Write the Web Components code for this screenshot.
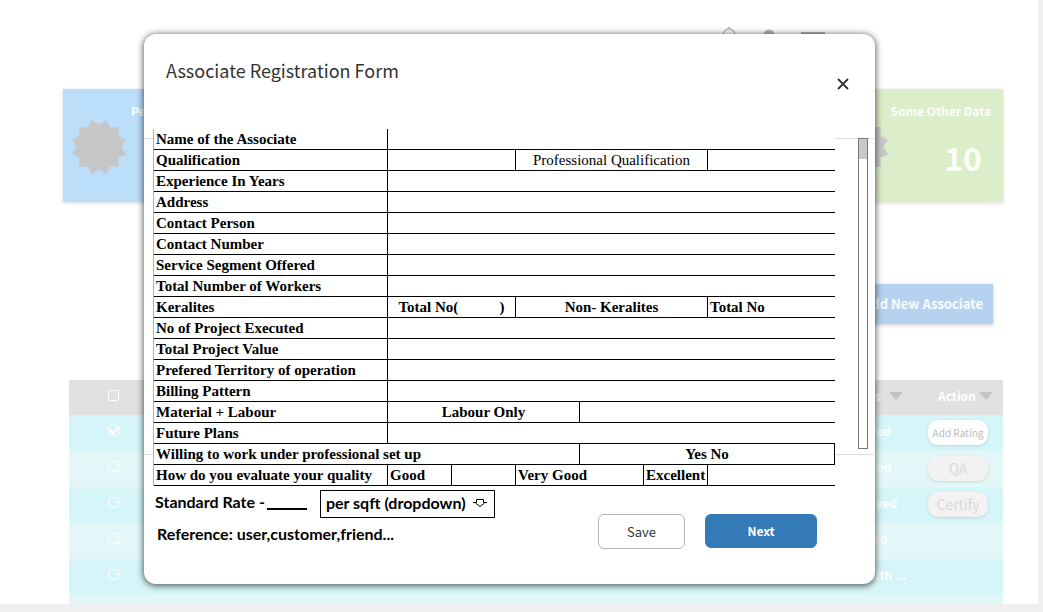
<!DOCTYPE html>
<html lang="en">
<head>
<meta charset="utf-8">
<title>Associate Registration</title>
<style>
  html, body { margin: 0; }
  body { position: relative; font-family: "Noto Sans CJK SC", "Open Sans", sans-serif; background: #fff; }
</style>
</head>
<body>
<dashboard-page>
  <stat-card slot="stats" tone="blue" heading="Pending"></stat-card>
  <stat-card slot="stats" tone="green" heading="Some Other Data" value="10"></stat-card>
  <associate-list></associate-list>
</dashboard-page>
<modal-dialog heading="Associate Registration Form">
  <registration-form></registration-form>
</modal-dialog>

<script>
const define = (name, html, setup) => {
  const template = document.createElement('template');
  template.innerHTML = html;
  customElements.define(name, class extends HTMLElement {
    constructor() {
      super();
      this.attachShadow({ mode: 'open' }).append(template.content.cloneNode(true));
    }
    connectedCallback() { if (setup) setup(this, this.shadowRoot); }
  });
};

define('burst-badge', `
<style>
  :host { display: block; width: 56px; height: 56px; }
  svg { display: block; }
</style>
<svg width="56" height="56" viewBox="0 0 56 56" aria-hidden="true"><polygon fill="#c6c6c6" stroke="#c6c6c6" stroke-width="3" stroke-linejoin="round"/></svg>`,
(host, root) => {
  const points = [];
  for (let i = 0; i < 24; i++) {
    const radius = i % 2 ? 26 : 20.5;
    const angle = i * Math.PI / 12;
    points.push((28 + radius * Math.sin(angle)).toFixed(2) + ',' + (28 - radius * Math.cos(angle)).toFixed(2));
  }
  root.querySelector('polygon').setAttribute('points', points.join(' '));
});

define('stat-card', `
<style>
  :host { display: grid; grid-template: 20px 1fr / 56px 1fr; width: 178px; height: 113px; box-sizing: border-box;
    padding: 12px 12px 0 8px; box-shadow: 0 1px 4px rgba(0,0,0,.15); color: #fbfdf9; }
  :host([tone=blue]) { background: #bbdefb; }
  :host([tone=green]) { background: #dbedc9; }
  h2 { grid-column: 1 / -1; margin: 0; font-size: 12px; line-height: 20px; font-weight: 700; text-align: right; }
  :host([tone=blue]) h2 { text-align: left; padding-left: 60px; }
  burst-badge { margin-top: -2px; }
  p { margin: 0; padding-right: 9px; font-size: 32px; line-height: 72px; font-weight: 700; text-align: right; }
</style>
<h2></h2><burst-badge></burst-badge><p></p>`,
(host, root) => {
  root.querySelector('h2').textContent = host.getAttribute('heading');
  root.querySelector('p').textContent = host.getAttribute('value') || '';
});

define('tick-box', `
<style>
  :host { display: block; width: 13px; height: 13px; }
  input { appearance: none; display: block; box-sizing: border-box; width: 11px; height: 11px; margin: 1px;
    border: 1px solid #fafefe; border-radius: 2px; }
  svg { display: none; position: absolute; margin-top: -12px; }
  :host([checked]) svg { display: block; }
</style>
<input type="checkbox" aria-label="Select row">
<svg width="14" height="11" viewBox="0 0 14 11" aria-hidden="true"><path d="M3 5l3 3 6-6" fill="none" stroke="#fff" stroke-width="2.4"/></svg>`,
(host, root) => { root.querySelector('input').checked = host.hasAttribute('checked'); });

define('associate-list', `
<style>
  :host { display: block; margin-left: 6px; }
  table { width: 100%; border-collapse: collapse; table-layout: fixed; color: #fcffff; font-size: 12px; line-height: 20px; }
  th, td { box-sizing: border-box; height: 36px; padding: 0 0 4px; text-align: left; vertical-align: middle; font-weight: 700; }
  th { height: 35px; background: #e1e1e1; }
  tbody tr { background: #e3f7f9; }
  tbody tr:nth-child(odd) { background: #d6f5f8; }
  .pick { width: 100px; padding-left: 38px; }
  .state { width: 88px; }
  .act { width: 75px; }
  .act button { margin-top: 2px; }
  .head { display: flex; align-items: center; justify-content: space-between; }
  .state .head { padding: 0 25px 0 3px; }
  .act .head { padding: 0 10px; }
  button { display: block; box-sizing: border-box; width: 60px; height: 25px; padding: 0; border: 0; border-radius: 10px;
    background: #f2f2f2; color: #dadada; font: 14px/25px "Noto Sans CJK SC", sans-serif; box-shadow: 0 1px 3px rgba(0,0,0,.12); }
  button.on { background: #fff; color: #bdbdbd; font-size: 10px; }
</style>
<table>
  <thead><tr>
    <th class="pick"><tick-box></tick-box></th><th></th>
    <th class="state"><div class="head">Status<svg width="14" height="8" aria-hidden="true"><path d="M0 0h14L7 8z" fill="#c4c4c4"/></svg></div></th>
    <th class="act"><div class="head">Action<svg width="14" height="8" aria-hidden="true"><path d="M0 0h14L7 8z" fill="#c4c4c4"/></svg></div></th>
  </tr></thead>
  <tbody></tbody>
</table>`,
(host, root) => {
  const rows = [
    ['Referred', '<button class="on" type="button">Add Rating</button>', true],
    ['Rejected', '<button type="button">QA</button>'],
    ['Approved', '<button type="button">Certify</button>'],
    ['Blocked', ''], ['Met With ...', ''], ['', '']
  ];
  root.querySelector('tbody').innerHTML = rows.map(([state, action, ticked]) =>
    `<tr><td class="pick"><tick-box ${ticked ? 'checked' : ''}></tick-box></td><td></td><td class="state">${state}</td><td class="act">${action}</td></tr>`).join('');
});

define('dashboard-page', `
<style>
  :host { display: block; box-sizing: border-box; height: 100vh; min-height: 612px; overflow: hidden;
    border-right: 5px solid #efefef; border-bottom: 8px solid #efefef; padding: 0 35px 0 63px; }
  header { display: flex; justify-content: flex-end; gap: 26px; height: 62px; padding: 27px 178px 0 0; }
  .stats { display: flex; justify-content: space-between; }
  .tools { display: flex; justify-content: flex-end; padding: 82px 10px 56px 0; }
  .tools button { height: 40px; padding: 0 10px; border: 0; background: #b7d2f0; color: #f8fbfe;
    font: 700 13px/40px "Noto Sans CJK SC", sans-serif; box-shadow: 0 1px 4px rgba(0,0,0,.2); }
</style>
<header>
  <svg width="16" height="24" viewBox="0 0 16 24" role="img" aria-label="Notifications"><path d="M2 16V8a6 6 0 0 1 12 0v8z" fill="none" stroke="#bdbdbd" stroke-width="1.5"/><path d="M8-1l2 3H6z" fill="#bdbdbd"/></svg>
  <svg width="12" height="24" viewBox="0 0 12 24" role="img" aria-label="Account"><circle cx="6" cy="8" r="5.5" fill="#b4b4b4"/></svg>
  <svg width="24" height="24" viewBox="0 0 24 24" role="img" aria-label="Menu"><path d="M0 6h24M0 12h24M0 18h24" stroke="#b0b0b0" stroke-width="2"/></svg>
</header>
<div class="stats"><slot name="stats"></slot></div>
<div class="tools"><button type="button">Add New Associate</button></div>
<slot></slot>`);

define('modal-dialog', `
<style>
  :host { display: block; position: absolute; inset: 0; padding: 34px 168px 28px 144px; }
  section { background: #fff; border-radius: 12px; box-shadow: 0 1px 6px 1px rgba(0,0,0,.6); }
  header { display: flex; align-items: flex-start; justify-content: space-between; box-sizing: border-box; height: 95px; padding: 22px 22px 0; }
  h1 { margin: 0; font-size: 18px; line-height: 28px; font-weight: 400; color: #333; }
  button { width: 20px; height: 20px; margin-top: 18px; padding: 0; border: 0; background: none; }
  svg { display: block; margin: auto; }
</style>
<section role="dialog" aria-labelledby="title">
  <header><h1 id="title"></h1>
    <button type="button" aria-label="Close"><svg width="12" height="12" viewBox="0 0 12 12"><path d="M1 1l10 10M11 1L1 11" stroke="#333" stroke-width="1.8"/></svg></button>
  </header>
  <slot></slot>
</section>`,
(host, root) => { root.querySelector('h1').textContent = host.getAttribute('heading'); });

define('scroll-track', `
<style>
  :host { display: block; box-sizing: border-box; width: 10px; height: 311px; border: 1px solid #777; background: #fff; }
  div { height: 20px; background: #c9c9c9; }
</style>
<div></div>`);

define('registration-form', `
<style>
  :host { display: block; }
  .body { position: relative; display: flex; align-items: flex-start; padding: 0 7px 0 9px; }
  .frame { position: absolute; inset: 9px 1px 31px 0; border: solid #ddd; border-width: 1px 0; }
  table { position: relative; flex: 1; width: 100%; border-collapse: separate; border-spacing: 0; table-layout: fixed; background: #fff;
    font: bold 15px/20px "Liberation Serif", serif; color: #000; border-left: 1px solid #a7b5c6; }
  scroll-track { position: relative; margin: 9px 0 0 23px; }
  .c1 { width: 233px; } .c { width: 64px; }
  th, td { box-sizing: border-box; height: 21px; padding: 0 0 0 2px; border-bottom: 1px solid #000; text-align: left; white-space: pre; }
  td { border-left: 1px solid #000; }
  .mid { text-align: center; padding: 0; }
  .plain { font-weight: normal; }
  .end { border-right: 1px solid #000; }
  input { display: block; box-sizing: border-box; width: 100%; height: 20px; margin: 0; padding: 0 4px; border: 0; background: none; font: inherit; outline: 0; }
  footer { display: flex; justify-content: space-between; align-items: flex-start; box-sizing: border-box; padding: 4px 58px 0 11px; height: 98px;
    font: 700 16px/28px Lato, sans-serif; color: #000; }
  .rate { display: flex; align-items: flex-start; height: 28px; }
  .rate label { line-height: 24px; }
  .rate input { width: 40px; height: 20px; margin: 0 13px 0 2px; border-bottom: 2px solid #000; }
  .unit { position: relative; display: flex; align-items: center; }
  select { appearance: none; box-sizing: border-box; width: 175px; height: 28px; padding: 0 5px 2px; border: 1px solid #000; border-radius: 0;
    background: #fff; color: #000; font: 700 16px/24px Lato, sans-serif; }
  .unit svg { position: absolute; right: 8px; top: 9px; pointer-events: none; }
  p { margin: 2px 0 0 2px; }
  .buttons { display: flex; gap: 20px; padding-top: 24px; }
  button { box-sizing: border-box; height: 34px; padding: 0; border-radius: 6px; font: 13px/32px "Noto Sans CJK SC", sans-serif; }
  .save { width: 87px; height: 35px; border: 1px solid #b5b5b5; background: #fff; color: #333; }
  .next { width: 112px; border: 1px solid #337ab7; background: #337ab7; color: #fff; font-weight: 700; font-size: 12px; }
</style>
<div class="body">
  <div class="frame"></div>
  <table>
    <colgroup><col class="c1"><col class="c"><col class="c"><col class="c"><col class="c"><col class="c"><col></colgroup>
    <tbody></tbody>
  </table>
  <scroll-track></scroll-track>
</div>
<footer>
  <div>
    <div class="rate">
      <label for="rate">Standard Rate -</label><input id="rate" type="text">
      <div class="unit"><select aria-label="Rate unit"><option>per sqft (dropdown)</option></select>
        <svg width="14" height="9" viewBox="0 0 14 9" aria-hidden="true"><path d="M0 3.5H3.5V.5H10.5V3.5H14M2.5 4L7 7.5 11.5 4" fill="none" stroke="#000"/></svg>
      </div>
    </div>
    <p>Reference: user,customer,friend...</p>
  </div>
  <div class="buttons"><button class="save" type="button">Save</button><button class="next" type="button">Next</button></div>
</footer>`,
(host, root) => {
  let count = 0;
  const field = (label, span) => `<td colspan="${span}"><input id="f${++count}" type="text" aria-label="${label}"></td>`;
  const head = (label, span = 1) => `<th scope="row" colspan="${span}">${label}</th>`;
  const line = label => `<tr><th scope="row"><label for="f${count + 1}">${label}</label></th>${field(label, 6)}</tr>`;
  const text = (label, span, cls = '') => `<td colspan="${span}" class="${cls}">${label}</td>`;
  root.querySelector('tbody').innerHTML = [
    line('Name of the Associate'),
    `<tr>${head('Qualification')}${field('Qualification', 2)}${text('Professional Qualification', 3, 'mid plain')}${field('Professional Qualification', 1)}</tr>`,
    ...['Experience In Years', 'Address', 'Contact Person', 'Contact Number', 'Service Segment Offered', 'Total Number of Workers'].map(line),
    `<tr>${head('Keralites')}${text('Total No(           )', 2, 'mid')}${text('Non- Keralites', 3, 'mid')}${text('Total No', 1)}</tr>`,
    ...['No of Project Executed', 'Total Project Value', 'Prefered Territory of operation', 'Billing Pattern'].map(line),
    `<tr>${head('Material + Labour')}${text('Labour Only', 3, 'mid')}${field('Labour Only', 3)}</tr>`,
    line('Future Plans'),
    `<tr>${head('Willing to work under professional set up', 4)}${text('Yes No', 3, 'mid end')}</tr>`,
    `<tr>${head('How do you evaluate your quality')}${text('Good', 1)}${field('Good', 1)}${text('Very Good', 2)}${text('Excellent', 1)}${field('Excellent', 1)}</tr>`
  ].join('');
});
</script>
</body>
</html>
